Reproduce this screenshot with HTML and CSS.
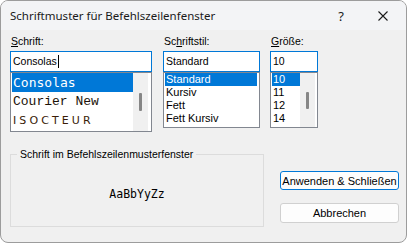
FILE: index.html
```html
<!DOCTYPE html>
<html lang="de">
  <head>
    <meta charset="UTF-8" />
    <title>Schriftmuster für Befehlszeilenfenster</title>
    <link rel="stylesheet" href="styles.css">
  </head>
  <body>
    <div class="window">
      <div class="titlebar">
        <span class="title">Schriftmuster für Befehlszeilenfenster</span>
        <span class="help">?</span>
        <svg class="close" width="10" height="10" viewBox="0 0 10 10">
          <path d="M0.5 0.5 L9.5 9.5 M9.5 0.5 L0.5 9.5" stroke="#1b1b1b" stroke-width="1.1" fill="none" />
        </svg>
      </div>

      <div class="content">
        <div class="pickers">
          <div class="picker font-picker">
            <div class="label"><u>S</u>chrift:</div>
            <div class="edit">Consolas<span class="caret"></span></div>
            <div class="list">
              <ul class="items">
                <li class="selected consolas">Consolas</li>
                <li class="courier">Courier New</li>
                <li class="isocteur">ISOCTEUR</li>
              </ul>
              <div class="scrollbar"><div class="thumb"></div></div>
            </div>
          </div>

          <div class="picker style-picker">
            <div class="label">Sc<u>h</u>riftstil:</div>
            <div class="edit">Standard</div>
            <div class="list">
              <ul class="items">
                <li class="selected">Standard</li>
                <li>Kursiv</li>
                <li>Fett</li>
                <li>Fett Kursiv</li>
              </ul>
            </div>
          </div>

          <div class="picker size-picker">
            <div class="label"><u>G</u>röße:</div>
            <div class="edit">10</div>
            <div class="list">
              <ul class="items">
                <li class="selected">10</li>
                <li>11</li>
                <li>12</li>
                <li>14</li>
              </ul>
              <div class="scrollbar"><div class="thumb"></div></div>
            </div>
          </div>
        </div>

        <div class="lower">
          <fieldset class="preview">
            <legend>Schrift im Befehlszeilenmusterfenster</legend>
            <div class="sample">AaBbYyZz</div>
          </fieldset>

          <div class="buttons">
            <button class="btn btn-default">Anwenden &amp; Schließen</button>
            <button class="btn btn-cancel">Abbrechen</button>
          </div>
        </div>
      </div>
    </div>
  </body>
</html>
```

FILE: styles.css
```css
* {
  margin: 0;
  padding: 0;
  box-sizing: border-box;
}

body {
  background: #ffffff;
  font-family: "Liberation Sans", Arial, sans-serif;
  font-size: 11px;
  color: #000;
}

.window {
  width: 407px;
  height: 243px;
  border: 1px solid #9c9c9c;
  border-radius: 8px;
  background: #f0f0f0;
  overflow: hidden;
}

/* title bar */

.titlebar {
  height: 29px;
  background: #f3f4f6;
  display: flex;
  align-items: center;
  padding: 0 18px 0 9px;
}

.title {
  font-family: "Noto Sans", "Liberation Sans", sans-serif;
  font-size: 11.5px;
  color: #1a1a1a;
}

.help {
  margin-left: auto;
  margin-right: 34px;
  font-family: "Noto Sans", sans-serif;
  font-size: 13px;
  color: #1a1a1a;
}

.close {
  display: block;
}

/* pickers */

.content {
  padding: 4px 0 0 9px;
}

.pickers {
  display: flex;
  align-items: flex-start;
}

.font-picker {
  width: 142px;
}

.style-picker {
  width: 97px;
  margin-left: 11px;
}

.size-picker {
  width: 48px;
  margin-left: 10px;
}

.label {
  font-size: 10.5px;
  line-height: 14px;
  height: 14px;
  margin-bottom: 3px;
  padding-left: 1px;
}

.label u {
  text-underline-offset: 1px;
}

.edit {
  height: 21px;
  border: 1px solid #0078d7;
  background: #fff;
  padding-left: 2px;
  line-height: 19px;
  font-size: 10.5px;
  display: flex;
  align-items: center;
}

.caret {
  display: inline-block;
  width: 1px;
  height: 13px;
  background: #000;
  margin-left: 1px;
}

.list {
  display: flex;
  height: 56px;
  border: 1px solid #828790;
  background: #fff;
}

.font-picker .list {
  height: 60px;
}

.items {
  list-style: none;
  flex: 1;
  padding-left: 1px;
}

.style-picker .items {
  padding-right: 2px;
}

.items li {
  height: 13px;
  line-height: 13px;
  padding-left: 1px;
  white-space: nowrap;
  font-size: 11px;
}

.items li.selected {
  background: #0078d7;
  color: #fff;
}

.font-picker .items li {
  height: 19px;
  line-height: 19px;
  font-size: 13px;
}

.consolas {
  font-family: "DejaVu Sans Mono", monospace;
}

.courier {
  font-family: "Liberation Mono", monospace;
  color: #1c1208;
}

.isocteur {
  font-family: "DejaVu Sans", sans-serif;
  font-size: 11px !important;
  letter-spacing: 3.1px;
  color: #3a1d08;
}

.scrollbar {
  width: 15px;
  background: #f0f0f0;
  margin-right: 3px;
}

.size-picker .scrollbar {
  margin-right: 2px;
}

.thumb {
  width: 3px;
  height: 18px;
  margin: 20px auto 0;
  background: #868686;
  border-radius: 1px;
}

.size-picker .thumb {
  height: 17px;
  margin-top: 19px;
}

/* preview + buttons */

.lower {
  display: flex;
  align-items: flex-start;
  margin-top: 16px;
}

.preview {
  width: 254px;
  height: 79px;
  border: 1px solid #dcdcdc;
}

.preview legend {
  margin-left: 6px;
  padding: 0 3px;
  font-size: 10.5px;
  line-height: 12px;
}

.sample {
  text-align: center;
  margin-top: 27px;
  font-family: "DejaVu Sans Mono", monospace;
  font-size: 11.5px;
  line-height: 14px;
}

.buttons {
  margin-left: 16px;
  margin-top: 23px;
  display: flex;
  flex-direction: column;
}

.btn {
  width: 119px;
  font-family: "Liberation Sans", Arial, sans-serif;
  font-size: 11px;
  color: #000;
  background: #fdfdfd;
  border-radius: 3px;
}

.btn-default {
  height: 19px;
  border: 1px solid #0078d7;
}

.btn-cancel {
  height: 20px;
  margin-top: 13px;
  border: 1px solid #d0d0d0;
}
```
